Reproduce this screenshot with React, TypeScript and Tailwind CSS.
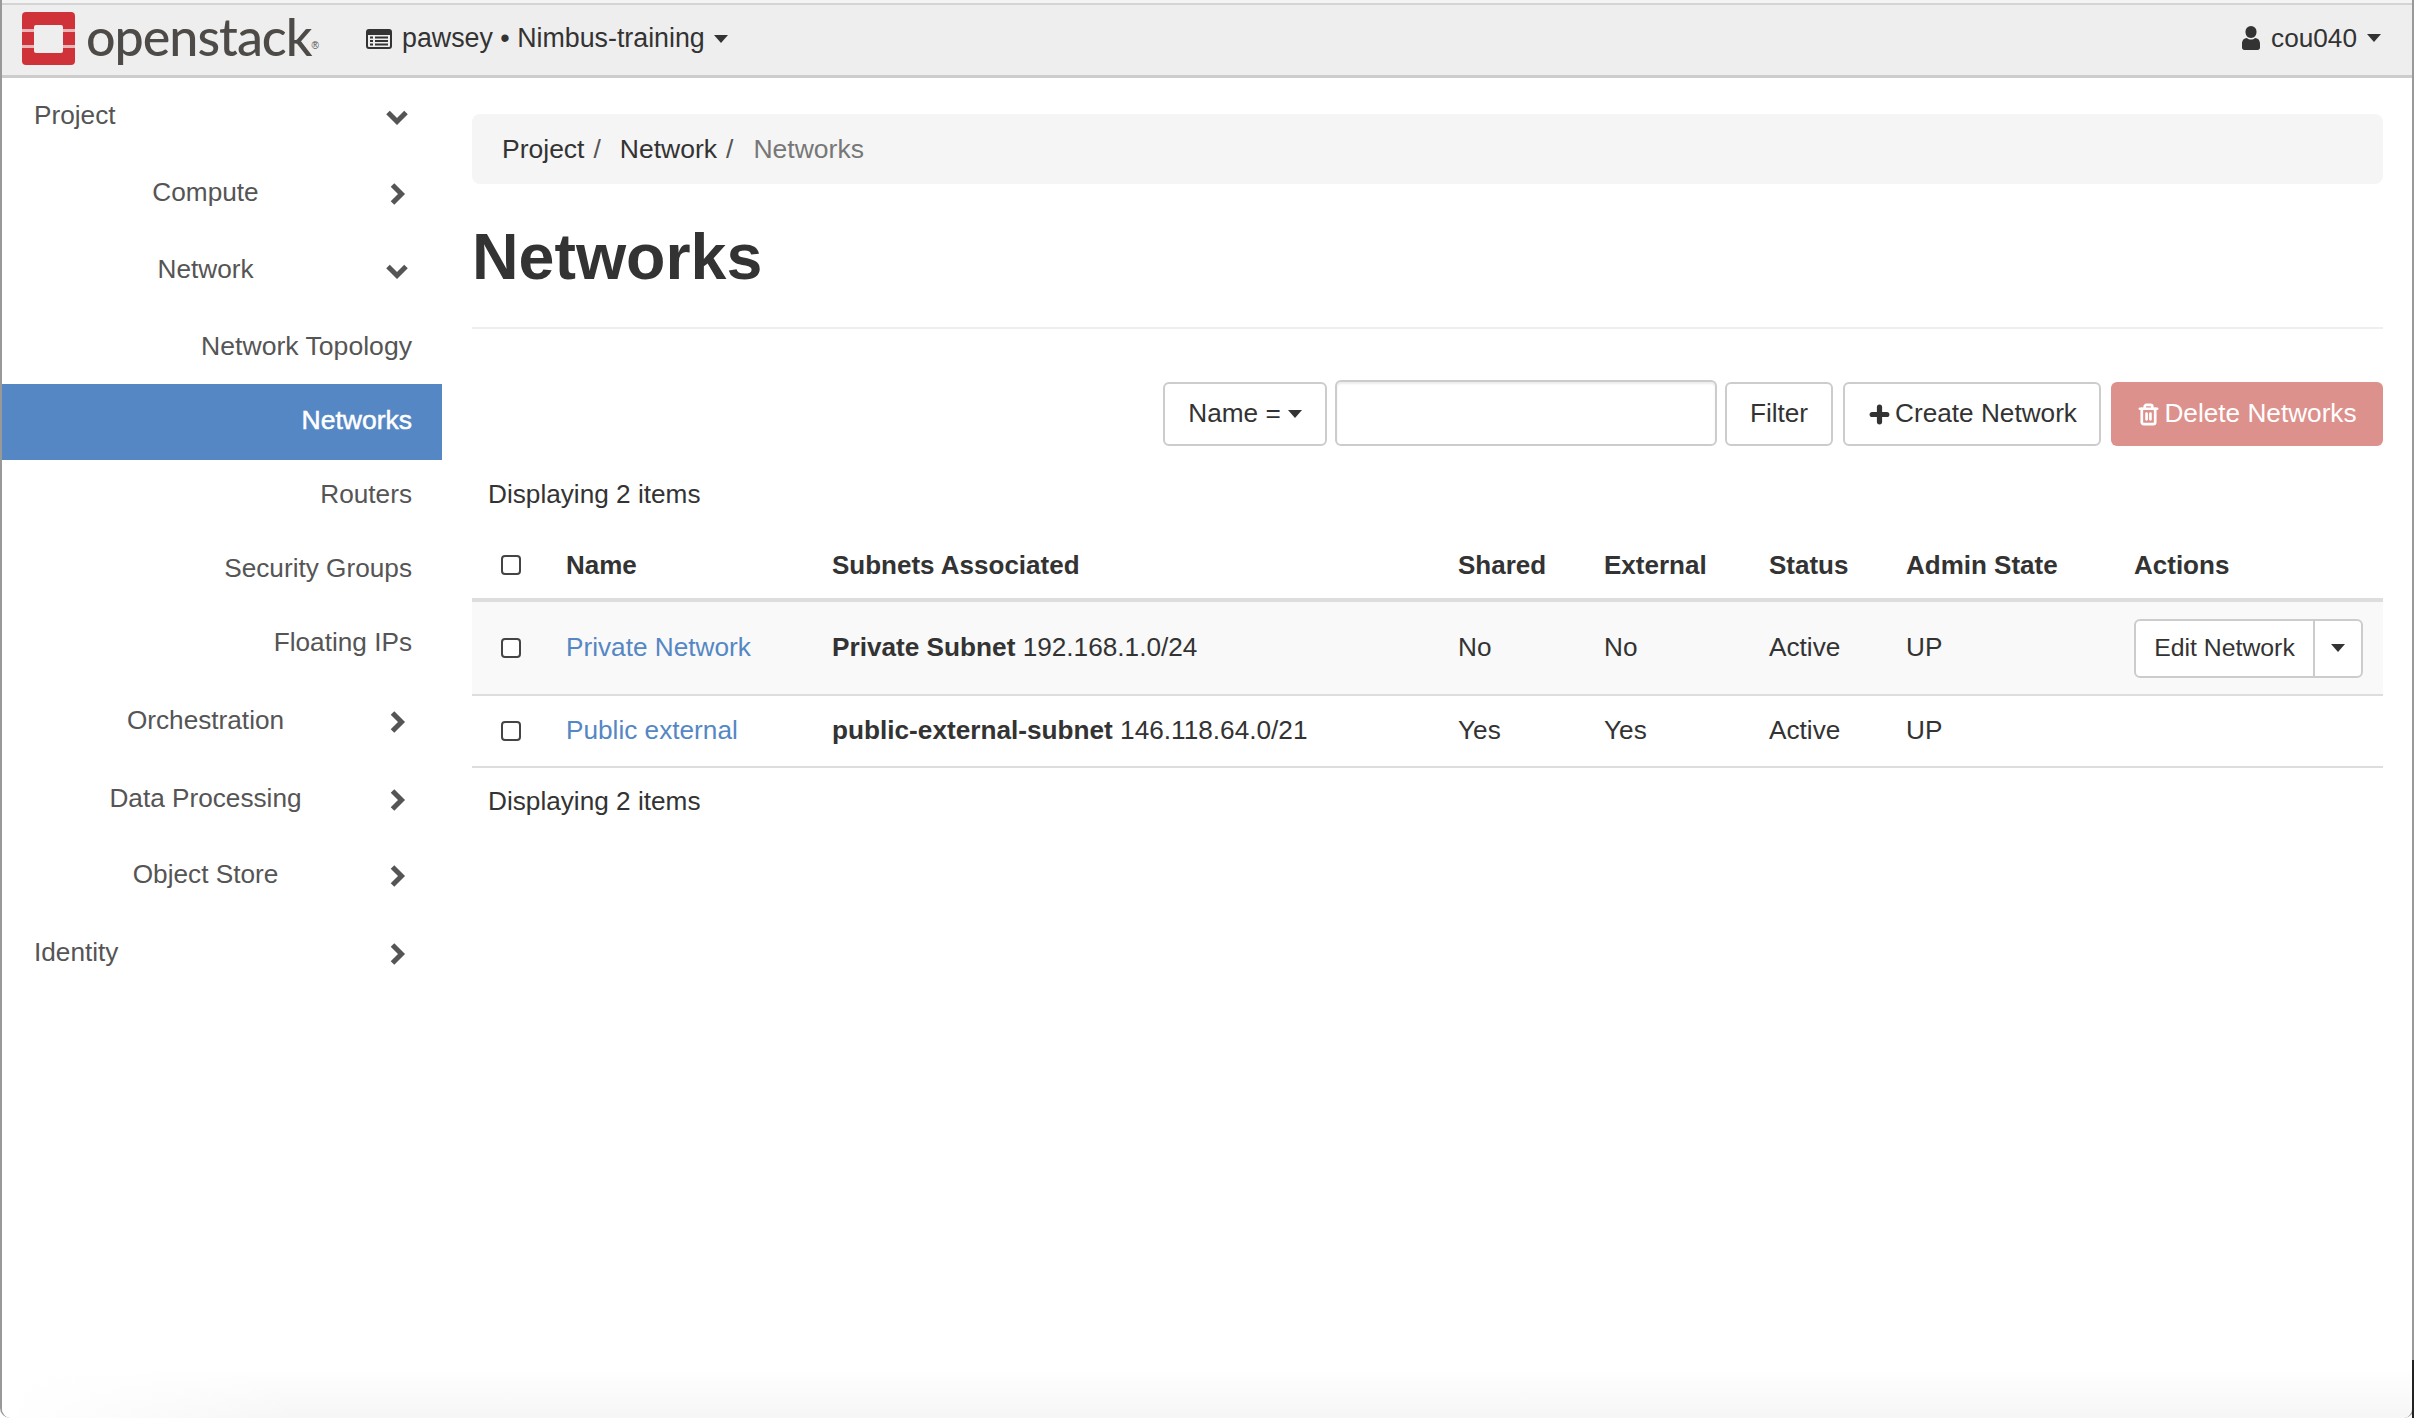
import { Plus, Trash2 } from 'lucide-react';

const font = "font-['Liberation_Sans',Arial,sans-serif]";

const Caret = ({ className = '' }: { className?: string }) => (
  <span className={`inline-block w-0 h-0 border-x-[7px] border-x-transparent border-t-[8px] border-t-current ${className}`} />
);

const Logo = () => (
  <svg width="53" height="53" viewBox="0 0 53 53" className="shrink-0">
    <path
      fill="#cf3339"
      d="M4 0h45a4 4 0 0 1 4 4v13H41v-2a2 2 0 0 0-2-2H14a2 2 0 0 0-2 2v2H0V4a4 4 0 0 1 4-4zM0 20h12v13H0zM41 20h12v13H41zM0 36h12v3a2 2 0 0 0 2 2h25a2 2 0 0 0 2-2v-3h12v13a4 4 0 0 1-4 4H4a4 4 0 0 1-4-4z"
    />
    <path fill="#e9b7b9" d="M0 17h12v3H0zM41 17h12v3H41zM0 33h12v3H0zM41 33h12v3H41z" />
  </svg>
);

const Chevron = ({ open }: { open?: boolean }) => (
  <svg width="24" height="24" viewBox="0 0 24 24" className="shrink-0 text-[#555]">
    <polyline
      points={open ? '3,7.500 12,16.500 21,7.500' : '7.500,3 16.500,12 7.500,21'}
      fill="none"
      stroke="currentColor"
      strokeWidth="5"
    />
  </svg>
);

const TopItem = ({ label, open, className }: { label: string; open?: boolean; className: string }) => (
  <div className={`flex items-center pl-[32px] pr-[33px] text-[#555] ${className}`}>
    <span className="flex-1 -mt-[3px]">{label}</span>
    <Chevron open={open} />
  </div>
);

const GroupItem = ({ label, open, className }: { label: string; open?: boolean; className: string }) => (
  <div className={`flex items-center pr-[33px] text-[#555] ${className}`}>
    <span className="flex-1 text-center pl-[24px] -mt-[2px]">{label}</span>
    <Chevron open={open} />
  </div>
);

const SubItem = ({ label, active, className = 'h-[74px]' }: { label: string; active?: boolean; className?: string }) => (
  <div
    className={
      active
        ? `flex items-center justify-end pr-[30px] pb-[2px] bg-[#5587c4] text-white [-webkit-text-stroke:0.5px_white] ${className}`
        : `flex items-center justify-end pr-[30px] text-[#555] ${className}`
    }
  >
    {label}
  </div>
);

const Btn = ({ children, className = '' }: { children: React.ReactNode; className?: string }) => (
  <button className={`h-[64px] border-2 border-[#ccc] rounded-[6px] bg-white text-[#333] flex items-center justify-center ${className}`}>
    {children}
  </button>
);

const Check = () => <span className="block w-[20px] h-[20px] border-2 border-[#444] rounded-[4px] bg-white" />;

const Sidebar = () => (
  <aside className="w-[440px] shrink-0 text-[26.200px]">
    <TopItem label="Project" open className="h-[78px]" />
    <GroupItem label="Compute" className="h-[76px]" />
    <GroupItem label="Network" open className="h-[78px]" />
    <SubItem label="Network Topology" className="h-[74px] text-[26.600px]" />
    <SubItem label="Networks" active className="h-[76px] text-[26.500px]" />
    <SubItem label="Routers" className="h-[72px] pb-[2px]" />
    <SubItem label="Security Groups" />
    <SubItem label="Floating IPs" />
    <GroupItem label="Orchestration" className="h-[84px]" />
    <GroupItem label="Data Processing" className="h-[72px]" />
    <GroupItem label="Object Store" className="h-[80px]" />
    <TopItem label="Identity" className="h-[76px]" />
  </aside>
);

export default function App() {
  return (
    <div className={`${font} relative w-[2414px] h-[1418px] bg-white text-[#333] text-[26.200px] border-l-2 border-l-[#999] border-r-2 border-r-[#999] rounded-b-[10px] flex flex-col`}>
      <div className="h-[3px] bg-[#f4f4f4] shrink-0" />
      <header className="h-[75px] shrink-0 bg-[#eee] border-t-2 border-t-[#d4d4d4] border-b-[3px] border-b-[#ccc] flex items-center pl-[20px] pr-[31px] pb-[3px]">
        <div className="w-[344px] shrink-0 flex items-center">
          <Logo />
          <span className="ml-[11px] -mt-[5px] font-['Lato',sans-serif] font-medium text-[52px] tracking-[-1px] text-[#4e4a47] leading-none">openstack</span>
          <span className="text-[10px] text-[#4e4a47] self-end mb-[12px]">®</span>
        </div>
        <svg width="26" height="20" viewBox="0 0 26 20" className="text-[#333]">
          <path fill="currentColor" fillRule="evenodd" d="M3 0h20a3 3 0 0 1 3 3v14a3 3 0 0 1-3 3H3a3 3 0 0 1-3-3V3a3 3 0 0 1 3-3zM2 6v11a1 1 0 0 0 1 1h20a1 1 0 0 0 1-1V6zM4 7.500h3v2H4zM9 7.500h13v2H9zM4 11h3v2H4zM9 11h13v2H9zM4 14.500h3v2H4zM9 14.500h13v2H9z" />
        </svg>
        <span className="ml-[10px] text-[26.800px]">pawsey • Nimbus-training</span>
        <Caret className="ml-[9px]" />
        <div className="ml-auto flex items-center">
          <svg width="18" height="24" viewBox="0 0 18 24" className="text-[#333]">
            <path fill="currentColor" d="M9 0a5.500 5.500 0 0 1 5.500 6c0 3-2 6-5.500 6S3.500 9 3.500 6A5.500 5.500 0 0 1 9 0zM5 12c1 1 2.500 1.500 4 1.500s3-.5 4-1.500c3 .3 5 2 5 6v3.500c0 1.500-1 2.500-2.500 2.500h-13C1 24 0 23 0 21.500V18c0-4 2-5.700 5-6z" />
          </svg>
          <span className="ml-[11px]">cou040</span>
          <Caret className="ml-[10px]" />
        </div>
      </header>

      <div className="flex flex-1 min-h-0">
        <Sidebar />
        <main className="flex-1 pl-[30px] pr-[29px] pt-[36px]">
          <nav className="h-[70px] rounded-[8px] bg-[#f5f5f5] flex items-center pl-[30px] pt-[2px] text-[26.500px]">
            <span>Project</span>
            <span className="ml-[9px] text-[#555]">/</span>
            <span className="ml-[19px]">Network</span>
            <span className="ml-[9px] text-[#555]">/</span>
            <span className="ml-[20px] text-[#777]">Networks</span>
          </nav>
          <h1 className="mt-[33px] text-[64.500px] leading-[80px] font-bold text-[#333]">Networks</h1>
          <hr className="mt-[30px] border-t-2 border-[#eee]" />

          <div className="mt-[51px] flex justify-end items-end">
            <Btn className="w-[164px]">
              Name = <Caret className="ml-[7px]" />
            </Btn>
            <div className="ml-[8px] w-[382px] h-[66px] border-2 border-[#ccc] rounded-[6px] bg-white shadow-[inset_0_2px_2px_rgba(0,0,0,0.08)]" />
            <Btn className="ml-[8px] w-[108px]">Filter</Btn>
            <Btn className="ml-[10px] w-[258px]">
              <Plus size={25} strokeWidth={5} className="mr-[3px]" />
              Create Network
            </Btn>
            <button className="ml-[10px] w-[272px] h-[64px] rounded-[6px] bg-[#dd918c] text-white flex items-center justify-center">
              <Trash2 size={23} strokeWidth={2.8} className="mr-[4px]" />
              Delete Networks
            </button>
          </div>

          <div className="mt-[32px] h-[34px] pl-[16px] flex items-center">Displaying 2 items</div>

          <table className="mt-[20px] w-full table-fixed border-collapse">
            <colgroup>
              <col className="w-[82px]" />
              <col className="w-[266px]" />
              <col className="w-[626px]" />
              <col className="w-[146px]" />
              <col className="w-[165px]" />
              <col className="w-[137px]" />
              <col className="w-[228px]" />
              <col />
            </colgroup>
            <thead>
              <tr className="h-[68px] border-b-4 border-b-[#ddd] font-bold text-left text-[26px]">
                <th className="pl-[29px]"><Check /></th>
                <th className="pl-[12px]">Name</th>
                <th className="pl-[12px]">Subnets Associated</th>
                <th className="pl-[12px]">Shared</th>
                <th className="pl-[12px]">External</th>
                <th className="pl-[12px]">Status</th>
                <th className="pl-[12px]">Admin State</th>
                <th className="pl-[12px]">Actions</th>
              </tr>
            </thead>
            <tbody>
              <tr className="h-[95px] bg-[#f9f9f9] border-b-2 border-b-[#ddd]">
                <td className="pl-[29px]"><Check /></td>
                <td className="pl-[12px] text-[#5587c4]">Private Network</td>
                <td className="pl-[12px]"><b>Private Subnet</b> 192.168.1.0/24</td>
                <td className="pl-[12px]">No</td>
                <td className="pl-[12px]">No</td>
                <td className="pl-[12px]">Active</td>
                <td className="pl-[12px]">UP</td>
                <td className="pl-[12px]">
                  <div className="w-[229px] h-[59px] border-2 border-[#ccc] rounded-[6px] bg-white flex items-center">
                    <span className="w-[179px] text-center text-[24.800px] border-r-2 border-r-[#ccc] h-full flex items-center justify-center">Edit Network</span>
                    <span className="flex-1 flex justify-center"><Caret /></span>
                  </div>
                </td>
              </tr>
              <tr className="h-[72px] border-b-2 border-b-[#ddd]">
                <td className="pl-[29px]"><Check /></td>
                <td className="pl-[12px] text-[#5587c4]">Public external</td>
                <td className="pl-[12px]"><b>public-external-subnet</b> 146.118.64.0/21</td>
                <td className="pl-[12px]">Yes</td>
                <td className="pl-[12px]">Yes</td>
                <td className="pl-[12px]">Active</td>
                <td className="pl-[12px]">UP</td>
                <td />
              </tr>
            </tbody>
          </table>

          <div className="mt-[17px] h-[34px] pl-[16px] flex items-center">Displaying 2 items</div>
        </main>
      </div>

      {/* window edge: fade and dark corner at the bottom */}
      <div className="absolute inset-x-0 bottom-0 h-[50px] rounded-b-[10px] bg-gradient-to-t from-[#f6f6f6] to-transparent" />
      <div className="absolute left-0 bottom-0 w-[300px] h-[50px] rounded-bl-[10px] bg-gradient-to-r from-white to-transparent" />
      <div className="absolute right-[-2px] bottom-0 w-[2px] h-[58px] bg-[#222]" />
    </div>
  );
}
